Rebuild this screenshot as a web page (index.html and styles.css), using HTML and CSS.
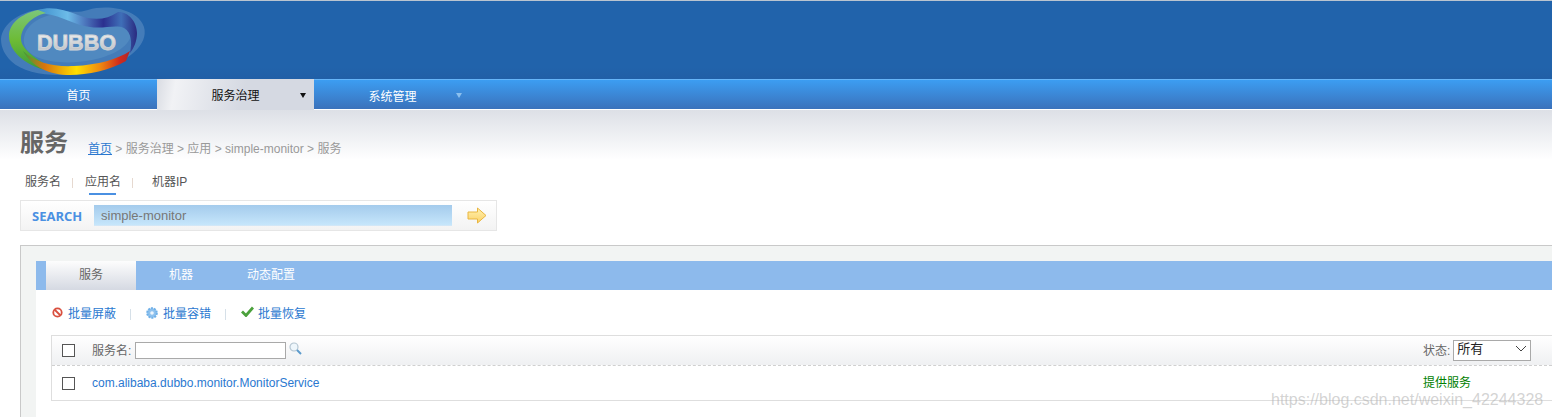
FILE: index.html
```html
<!DOCTYPE html>
<html lang="zh">
<head>
<meta charset="utf-8">
<title>Dubbo</title>
<link rel="stylesheet" href="styles.css">
</head>
<body>
<header class="top">
  <svg class="logo" width="160" height="78" viewBox="0 0 160 78" aria-label="DUBBO">
    <defs>
      <linearGradient id="rb" x1="0" y1="0" x2="1" y2="0">
        <stop offset="0" stop-color="#3f9a3a"/><stop offset=".2" stop-color="#d9740f"/><stop offset=".5" stop-color="#ffdf00"/><stop offset=".72" stop-color="#ee8a10"/><stop offset=".9" stop-color="#d22c1c"/><stop offset="1" stop-color="#b0252a"/>
      </linearGradient>
      <linearGradient id="gr" x1="0" y1="0" x2="0" y2="1">
        <stop offset="0" stop-color="#7cc67a"/><stop offset=".5" stop-color="#6dbb35"/><stop offset="1" stop-color="#3a9a3c"/>
      </linearGradient>
      <linearGradient id="bl" x1="0" y1="0" x2="1" y2="0">
        <stop offset="0" stop-color="#3f8fcc"/><stop offset=".3" stop-color="#6cbbe8"/><stop offset=".66" stop-color="#2b2f8f"/><stop offset=".84" stop-color="#3f6fb8"/><stop offset="1" stop-color="#2a2a80"/>
      </linearGradient>
      <linearGradient id="tx" x1="0" y1="0" x2="0" y2="1">
        <stop offset="0" stop-color="#f6f6f6"/><stop offset="1" stop-color="#b4b8bc"/>
      </linearGradient>
    </defs>
    <path class="haze" d="M1 38C2 22 22 9 45 8 62 7 72 14 88 9 108 3 138 8 144 26 149 44 128 60 102 68 72 77 28 77 11 60 5 54 1 47 1 38Z"/>
    <path class="pane" d="M24 42C22 24 44 11 66 13 82 15 92 22 108 18 122 14 131 20 131 32 131 44 116 54 92 59 62 65 27 60 24 42Z"/>
    <path fill="url(#bl)" d="M38 9C52 5 64 9 78 14 94 20 106 19 118 11 127 10 137 20 137 32 137 40 134 47 130 52 132 42 132 32 124 27 116 23 104 28 90 26 74 24 62 15 46 13 42 12 39 11 38 9Z"/>
    <path fill="url(#gr)" d="M38 9C20 13 9 23 9 35 9 50 24 62 41 68L56 70C36 58 21 48 21 38 21 26 32 15 46 12Z"/>
    <path fill="url(#rb)" d="M23 50C36 62 54 66 74 65 98 64 118 58 130 50L126 60C110 69 88 74 70 74 50 74 32 66 23 50Z"/>
    <text class="brand" x="37" y="49" textLength="79" lengthAdjust="spacingAndGlyphs" fill="url(#tx)">DUBBO</text>
  </svg>
</header>
<nav class="nav">
  <a class="nav-item">首页</a>
  <a class="nav-item nav-active">服务治理<i class="caret caret-dark"></i></a>
  <a class="nav-item nav-low">系统管理<i class="caret caret-pale"></i></a>
</nav>
<main class="main">
  <div class="title-row">
    <h1 class="title">服务</h1>
    <p class="crumbs"><a class="home">首页</a> &gt; 服务治理 &gt; 应用 &gt; simple-monitor &gt; 服务</p>
  </div>
  <div class="kinds">
    <span class="kind">服务名</span><span class="kind-sep"></span>
    <span class="kind kind-on">应用名</span><span class="kind-sep"></span>
    <span class="kind kind-last">机器IP</span>
  </div>
  <form class="search">
    <span class="search-label">SEARCH</span>
    <span class="search-input">simple-monitor</span>
    <svg class="search-go" width="20" height="17" viewBox="0 0 20 17">
      <defs><linearGradient id="ar" x1="0" y1="0" x2="0" y2="1"><stop offset="0" stop-color="#fff2b0"/><stop offset="1" stop-color="#fbd168"/></linearGradient></defs>
      <path d="M1 5H10.500V1L19 8.500 10.500 16V12H1Z" fill="url(#ar)" stroke="#e9b640"/>
    </svg>
  </form>
  <section class="panel">
    <div class="tabs">
      <a class="tab tab-on">服务</a>
      <a class="tab">机器</a>
      <a class="tab">动态配置</a>
    </div>
    <div class="body">
      <div class="actions">
        <svg class="icon" width="11" height="11" viewBox="0 0 11 11"><circle cx="5.500" cy="5.500" r="4.200" fill="#fff" stroke="#d9503f" stroke-width="1.800"/><path d="M2.500 2.500 8.500 8.500" stroke="#d9503f" stroke-width="1.800"/></svg>
        <a class="act">批量屏蔽</a><span class="act-sep"></span>
        <svg class="icon" width="12" height="12" viewBox="0 0 12 12"><circle cx="6" cy="6" r="4.800" fill="#8fc2ee" stroke="#6fb0e8" stroke-width="2" stroke-dasharray="2 1"/><circle cx="6" cy="6" r="1.800" fill="#eef6fd"/></svg>
        <a class="act">批量容错</a><span class="act-sep"></span>
        <svg class="icon icon-check" width="13" height="11" viewBox="0 0 13 11"><path d="M1 5.500 5 9.500 12 1.500" fill="none" stroke="#4ba13c" stroke-width="2.800"/></svg>
        <a class="act">批量恢复</a>
      </div>
      <div class="list">
        <div class="row row-head">
          <span class="check"></span>
          <label class="name-cell">服务名:<span class="filter"></span>
            <svg class="lens" width="13" height="13" viewBox="0 0 13 13"><circle cx="5" cy="5" r="4" fill="#eef6fb" stroke="#b5c6d2" stroke-width="1.200"/><path d="M8 8 12 12" stroke="#5c9bcc" stroke-width="2"/></svg>
          </label>
          <span class="state-cell">状态:<span class="select"><span class="select-text">所有</span><svg width="12" height="7" viewBox="0 0 12 7"><path d="M1 1 6 6 11 1" fill="none" stroke="#444"/></svg></span></span>
        </div>
        <div class="row">
          <span class="check"></span>
          <a class="name-cell service">com.alibaba.dubbo.monitor.MonitorService</a>
          <span class="state-cell ok">提供服务</span>
        </div>
      </div>
    </div>
  </section>
</main>
<div class="watermark">https://blog.csdn.net/weixin_42244328</div>
</body>
</html>
```
FILE: styles.css
```css
* { box-sizing: border-box; }
html, body { margin: 0; height: 417px; overflow: hidden; }
body {
  position: relative;
  background: #fff;
  color: #666;
  font: 12px/16px "Liberation Sans", "Noto Sans CJK SC", sans-serif;
}
.top {
  height: 79px;
  background: linear-gradient(#2163ab, #2163ab 85%, #215fa6);
  border-top: 1px solid #b9c4d0;
}
.logo { display: block; }
.haze { fill: #7fa6d0; fill-opacity: .38; }
.pane { fill: #5089c0; }
.brand { font: 900 22px "Liberation Sans", sans-serif; stroke: #d0d4d8; stroke-width: .8px; }
.nav {
  display: flex;
  height: 31px;
  background: linear-gradient(#3c9df2, #3b72bb);
  border-top: 1px solid #66b5f8;
  border-bottom: 1px solid #fff;
}
.nav-item {
  position: relative;
  width: 157px;
  color: #fff;
  text-align: center;
  line-height: 32px;
}
.nav-active {
  margin-top: -1px;
  height: 31px;
  color: #111;
  background: linear-gradient(100deg, #d9dce3, #f1f2f5 12%, #d5d9e2 55%);
  line-height: 34px;
}
.nav-low { line-height: 34px; }
.caret {
  position: absolute;
  top: 14px;
  right: 8px;
  border: 3.500px solid transparent;
  border-bottom: 0;
  border-top-width: 5px;
}
.caret-dark { border-top-color: #111; }
.caret-pale { right: 9px; border-top-color: #8cc0ee; top: 13px; }
.main {
  padding: 21px 0 0 20px;
  height: 307px;
  background: linear-gradient(#dde0e6, #fff 50px);
}
.title-row { display: flex; align-items: flex-end; height: 30px; }
.title {
  margin: 0;
  width: 68px;
  color: #666;
  font-size: 24px;
  line-height: 24px;
  font-weight: 700;
  align-self: flex-start;
}
.crumbs { margin: 0; color: #999; line-height: 16px; padding-bottom: 4px; }
.home { color: #2a78d0; text-decoration: underline; }
.kinds { display: flex; align-items: flex-start; margin-top: 13px; height: 26px; padding-left: 5px; color: #555; line-height: 16px; }
.kind { position: relative; }
.kind-sep { width: 1px; height: 10px; margin: 4px 12px 0 11px; background: #e6d9d0; }
.kind-sep + .kind-last { margin-left: 7px; }
.kind-on::after {
  content: "";
  position: absolute;
  left: 4px;
  right: 5px;
  bottom: -5px;
  height: 2px;
  background: #4a90e2;
}
.search {
  display: flex;
  align-items: center;
  width: 477px;
  height: 31px;
  padding-left: 11px;
  border: 1px solid #e6e6e6;
  background: linear-gradient(#fff, #f3f3f3);
}
.search-label {
  width: 62px;
  color: #4a90e2;
  font: 700 13px "Open Sans", sans-serif;
}
.search-input {
  width: 358px;
  height: 21px;
  padding-left: 7px;
  color: #777;
  font-size: 13px;
  line-height: 21px;
  background: linear-gradient(#a4cbec, #c6e6fb);
  border-bottom: 1px solid #d2e7f7;
}
.search-go { margin-left: 15px; }
.panel {
  margin-top: 14px;
  padding: 15px 0 0 15px;
  height: 172px;
  background: #f2f4f3;
  border: 1px solid #c9c9c9;
  border-width: 1px 0 0 1px;
}
.tabs { display: flex; height: 29px; padding-left: 10px; background: #8dbaec; }
.tab { width: 90px; color: #fff; text-align: center; line-height: 28px; }
.tab-on { color: #666; background: linear-gradient(#fdfdfd, #d5d9e2); }
.body { height: 127px; padding: 0 0 0 15px; background: #fff; }
.actions { display: flex; align-items: center; height: 45px; padding: 2px 0 0 1px; color: #2a78d0; }
.icon { flex: none; margin-right: 5px; margin-top: -2px; }
.icon-check { margin-right: 4px; margin-top: -4px; }
.act-sep { width: 1px; height: 11px; margin: 1px 15px 0 14px; background: #d6e0e8; }
.list { height: 66px; border: 1px solid #dedede; border-width: 1px 0 1px 1px; }
.row { display: flex; align-items: center; height: 34px; }
.row-head {
  height: 30px;
  background: linear-gradient(#fff, #eff0f2);
  border-bottom: 1px dashed #d0d0d0;
}
.check { flex: none; width: 13px; height: 13px; margin: 0 17px 0 10px; border: 1px solid #555; background: #fff; }
.name-cell { display: flex; align-items: center; flex: 1; color: #666; }
.filter { width: 151px; height: 17px; margin-left: 4px; border: 1px solid #a9a9a9; background: #fff; }
.lens { margin: -4px 0 0 3px; }
.service { color: #2a78d0; }
.state-cell { display: flex; align-items: center; flex: none; width: 129px; color: #666; }
.select {
  display: flex;
  align-items: center;
  justify-content: space-between;
  width: 78px;
  height: 21px;
  margin-left: 3px;
  padding: 0 3px 4px 3px;
  color: #222;
  font-size: 13px;
  border: 1px solid #a9a9a9;
  background: #fff;
}
.ok { color: #008000; }
.watermark {
  position: absolute;
  left: 1271px;
  top: 390px;
  color: rgba(175, 175, 175, .55);
  font-size: 16px;
  line-height: 19px;
  white-space: nowrap;
  pointer-events: none;
}
```
